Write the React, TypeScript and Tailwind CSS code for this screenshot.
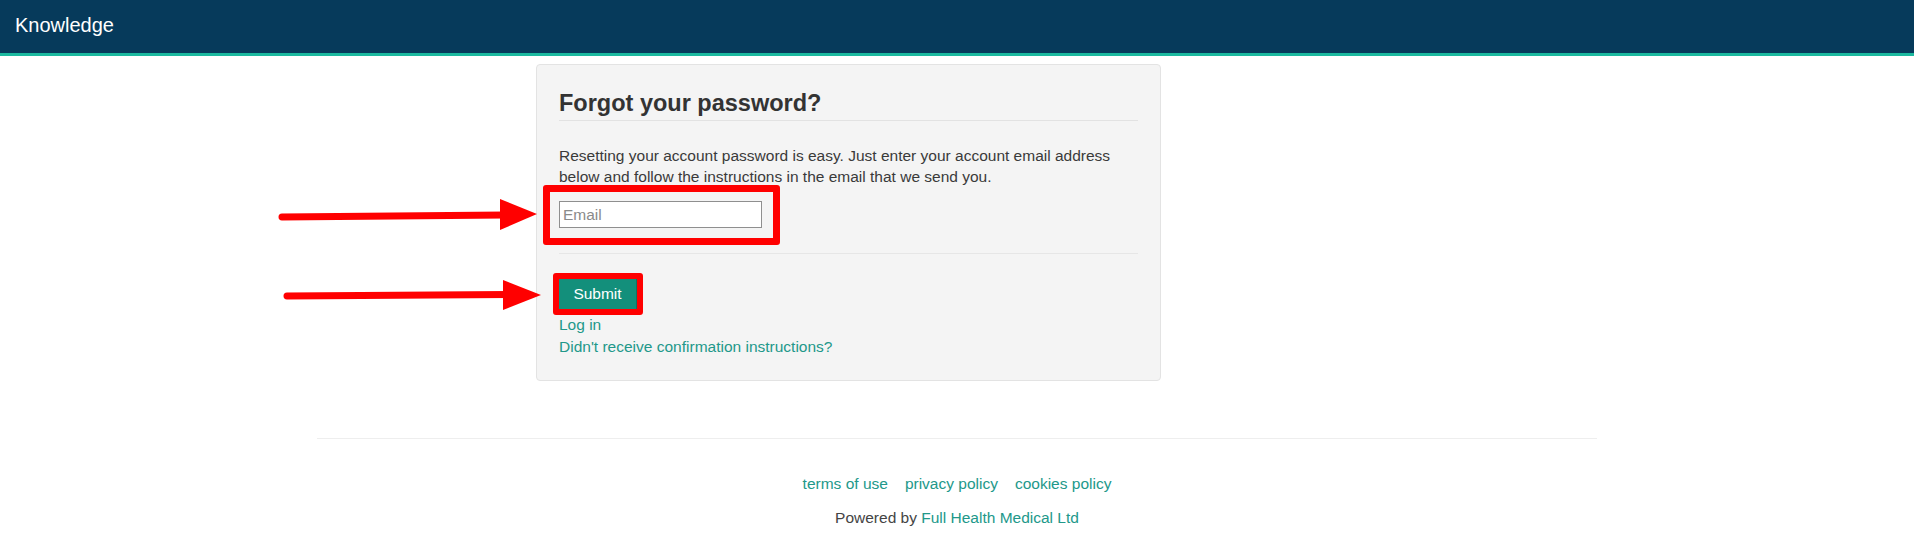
export default function App() {
  return (
    <div className="relative min-h-[547px] bg-white font-['Liberation_Sans',Arial,sans-serif] text-[15.5px] text-[#3a3a3a]">
      {/* header */}
      <header className="flex h-[56px] items-start border-b-[3px] border-[#1bb99f] bg-[#063a5b] px-[15px]">
        <span className="pt-[12px] text-[20px] leading-[26px] text-white">Knowledge</span>
      </header>

      {/* forgot password card */}
      <div className="relative ml-[536px] mt-2 w-[625px] rounded border border-[#e3e3e3] bg-[#f4f4f4] px-[22px] pt-[25px] pb-[22px]">
        <h3 className="border-b border-[#e2e2e2] pb-[4px] text-[23.5px] font-bold leading-[26px] text-[#333333]">
          Forgot your password?
        </h3>
        <p className="mt-[24px] leading-[21px]">
          Resetting your account password is easy. Just enter your account email address
          <br />
          below and follow the instructions in the email that we send you.
        </p>
        <input
          type="email"
          placeholder="Email"
          className="mt-[14px] block h-[27px] w-[203px] border border-[#8f8f8f] bg-white px-[3px] text-[15.5px] placeholder:text-[#8a8a8a]"
        />
        <div className="mt-[25px] border-t border-[#e6e6e6]" />
        <button className="mt-[25px] h-[30px] w-[78px] border-r border-[#0e7564] bg-[#138f7b] text-[15.5px] leading-[30px] text-white">
          Submit
        </button>
        <div className="mt-[5px] flex flex-col items-start leading-[22px] text-[#22988a]">
          <a href="#">Log in</a>
          <a href="#">Didn't receive confirmation instructions?</a>
        </div>

        {/* annotation boxes */}
        <div className="pointer-events-none absolute left-[6px] top-[120px] h-[60px] w-[237px] rounded-[3px] border-[7px] border-[#ff0000]" />
        <div className="pointer-events-none absolute left-[16px] top-[208px] h-[42px] w-[90px] rounded-[3px] border-[6px] border-[#ff0000]" />
      </div>

      {/* footer */}
      <footer className="mx-auto mt-[57px] w-[1280px] border-t border-[#eeeeee] pt-[34px] text-center leading-[22px]">
        <div className="flex justify-center gap-[17px] text-[#22988a]">
          <a href="#">terms of use</a>
          <a href="#">privacy policy</a>
          <a href="#">cookies policy</a>
        </div>
        <div className="mt-[12px] text-[#444444]">
          Powered by <a href="#" className="text-[#22988a]">Full Health Medical Ltd</a>
        </div>
      </footer>

      {/* red arrows */}
      <svg className="pointer-events-none absolute left-0 top-0" width="1914" height="547">
        <line x1="282" y1="217" x2="505" y2="215" stroke="#ff0000" strokeWidth="7" strokeLinecap="round" />
        <polygon points="500,199 537,214 500,230" fill="#ff0000" />
        <line x1="287" y1="296" x2="508" y2="294.5" stroke="#ff0000" strokeWidth="7" strokeLinecap="round" />
        <polygon points="503,280 541,295 503,310" fill="#ff0000" />
      </svg>
    </div>
  );
}
